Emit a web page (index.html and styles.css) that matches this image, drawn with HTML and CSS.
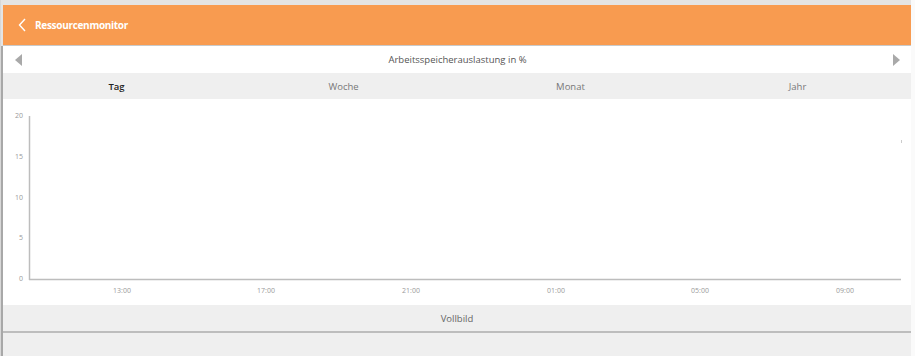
FILE: index.html
```html
<!DOCTYPE html>
<html lang="de">
<head>
    <meta charset="UTF-8">
    <meta name="viewport" content="width=device-width, initial-scale=1.0">
    <title>Ressourcenmonitor</title>
    <link rel="stylesheet" href="styles.css">
</head>
<body>
    <div class="frame">
        <header class="topbar">
            <svg class="back" width="8" height="14" viewBox="0 0 8 14">
                <path d="M7 1 L1.5 7 L7 13" fill="none" stroke="#fff" stroke-width="1.4"/>
            </svg>
            <span class="topbar-title">Ressourcenmonitor</span>
        </header>

        <main class="panel">
            <div class="nav">
                <span class="arrow arrow-left"></span>
                <span class="nav-title">Arbeitsspeicherauslastung in %</span>
                <span class="arrow arrow-right"></span>
            </div>

            <div class="tabs">
                <span class="tab active">Tag</span>
                <span class="tab">Woche</span>
                <span class="tab">Monat</span>
                <span class="tab">Jahr</span>
            </div>

            <div class="chart">
                <svg width="908" height="206" viewBox="0 0 908 206">
                    <g class="y-labels" text-anchor="end">
                        <text x="20" y="19">20</text>
                        <text x="20" y="60">15</text>
                        <text x="20" y="101">10</text>
                        <text x="20" y="141">5</text>
                        <text x="20" y="182">0</text>
                    </g>
                    <line x1="26.5" y1="17" x2="26.5" y2="181" stroke="#bdbdbd" stroke-width="1.5"/>
                    <line x1="26" y1="180.5" x2="898" y2="180.5" stroke="#bdbdbd" stroke-width="1.5"/>
                    <line x1="898.5" y1="41" x2="898.5" y2="44" stroke="#ccc" stroke-width="1"/>
                    <g class="x-labels" text-anchor="middle">
                        <text x="119" y="194">13:00</text>
                        <text x="263" y="194">17:00</text>
                        <text x="408" y="194">21:00</text>
                        <text x="553" y="194">01:00</text>
                        <text x="697" y="194">05:00</text>
                        <text x="842" y="194">09:00</text>
                    </g>
                </svg>
            </div>

            <div class="fullscreen">Vollbild</div>
        </main>
    </div>
</body>
</html>
```

FILE: styles.css
```css
* {
    margin: 0;
    padding: 0;
    box-sizing: border-box;
}

body {
    font-family: 'Open Sans', 'DejaVu Sans', sans-serif;
    background-color: #fafafa;
    height: 356px;
    overflow: hidden;
}

.frame {
    width: 911px;
    height: 356px;
    padding-top: 5px;
    background-color: #e4e4e4;
    border-left: 1px solid #d8d8d8;
    display: flex;
    flex-direction: column;
}

.topbar {
    margin-left: 2px;
    height: 41px;
    background-color: #f89b50;
    border-bottom: 1px solid #c9c9c9;
    display: flex;
    align-items: center;
    padding-left: 15px;
    gap: 9px;
    color: #fff;
}

.back {
    display: block;
}

.topbar-title {
    font-size: 10px;
    font-weight: 700;
    letter-spacing: -0.3px;
}

.panel {
    flex: 1;
    border-left: 2px solid #a8a8a8;
    background-color: #efefef;
    display: flex;
    flex-direction: column;
}

.nav {
    height: 27px;
    background-color: #fff;
    display: flex;
    align-items: center;
    justify-content: space-between;
    padding: 0 11px 0 12px;
}

.nav-title {
    font-size: 9.5px;
    color: #555;
}

.arrow {
    width: 0;
    height: 0;
    border-top: 6px solid transparent;
    border-bottom: 6px solid transparent;
}

.arrow-left {
    border-right: 7px solid #a9a9a9;
}

.arrow-right {
    border-left: 7px solid #a9a9a9;
}

.tabs {
    height: 26px;
    background-color: #efefef;
    display: grid;
    grid-template-columns: repeat(4, 1fr);
    align-items: center;
    text-align: center;
    font-size: 9.5px;
    color: #777;
}

.tab.active {
    color: #222;
    font-weight: 600;
}

.chart {
    height: 206px;
    background-color: #fff;
}

.chart svg {
    display: block;
}

.chart text {
    font-family: 'Open Sans', 'DejaVu Sans', sans-serif;
    font-size: 7px;
    fill: #9a9a9a;
}

.fullscreen {
    height: 28px;
    border-bottom: 2px solid #bdbdbd;
    display: flex;
    align-items: center;
    justify-content: center;
    font-size: 9.5px;
    color: #666;
}
```
